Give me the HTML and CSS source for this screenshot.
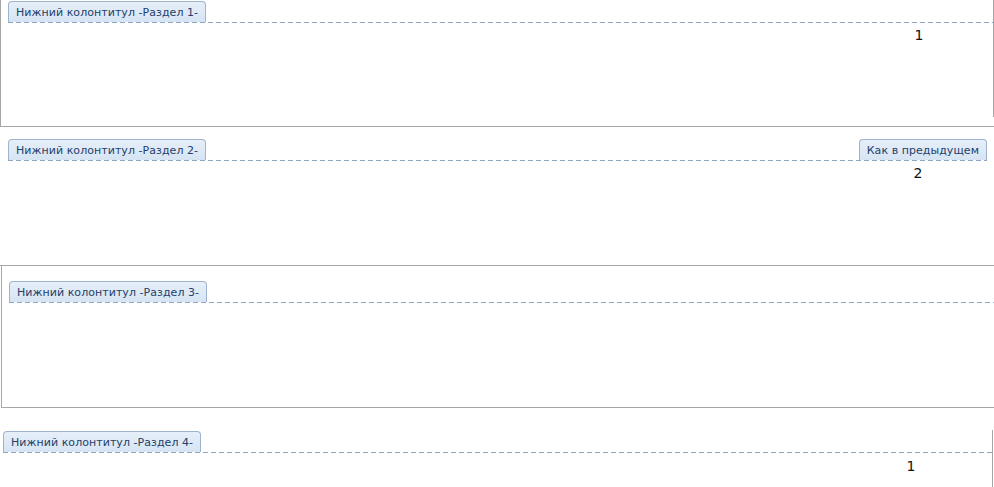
FILE: index.html
```html
<!DOCTYPE html>
<html lang="ru">
<head>
<meta charset="utf-8">
<link rel="stylesheet" href="styles.css">
</head>
<body>
<div class="doc">
  <section class="sec s1">
    <div class="bar">
      <span class="tab">Нижний колонтитул -Раздел 1-</span>
    </div>
    <div class="num">1</div>
  </section>
  <section class="sec s2">
    <div class="bar">
      <span class="tab">Нижний колонтитул -Раздел 2-</span>
      <span class="tab tab-right">Как в предыдущем</span>
    </div>
    <div class="num">2</div>
  </section>
  <section class="sec s3">
    <div class="bar">
      <span class="tab">Нижний колонтитул -Раздел 3-</span>
    </div>
  </section>
  <section class="sec s4">
    <div class="bar">
      <span class="tab">Нижний колонтитул -Раздел 4-</span>
    </div>
    <div class="num">1</div>
  </section>
</div>
</body>
</html>
```
FILE: styles.css
```css
html, body {
  margin: 0;
  padding: 0;
  background: #ffffff;
}
body {
  width: 994px;
  height: 487px;
  overflow: hidden;
  font-family: "DejaVu Sans", sans-serif;
}
.doc {
  display: flex;
  flex-direction: column;
}
.sec {
  box-sizing: border-box;
  display: flex;
  flex-direction: column;
}
.bar {
  display: flex;
  justify-content: space-between;
  align-items: flex-end;
  padding-bottom: 1px;
  background: repeating-linear-gradient(to right, #8ea6bf 0 5px, transparent 5px 8px) bottom left / 990px 1px no-repeat;
}
.tab {
  box-sizing: border-box;
  height: 21px;
  padding: 1px 7px 0;
  display: flex;
  align-items: center;
  font-size: 11px;
  letter-spacing: 0.05px;
  color: #24406a;
  background: linear-gradient(#e6eff9, #d6e4f3);
  border: 1px solid #9fb4cc;
  border-bottom: none;
  border-radius: 4px 4px 0 0;
}
.num {
  font-family: "DejaVu Sans", sans-serif;
  font-size: 14px;
  color: #111;
  line-height: 15px;
  width: 10px;
  text-align: center;
}
.s1 {
  height: 127px;
  border-left: 1px solid #a6a6a6;
  border-bottom: 1px solid #a6a6a6;
  padding: 1px 0 0 7px;
  background: linear-gradient(#a6a6a6, #a6a6a6) right top / 1px 117px no-repeat;
}
.s1 .num { margin: 5px 0 0 906px; }
.s2 {
  height: 139px;
  border-bottom: 1px solid #a6a6a6;
  padding: 12px 7px 0 8px;
}
.s2 .num { margin: 5px 0 0 905px; }
.s3 {
  height: 142px;
  margin-left: 1px;
  border-left: 1px solid #a6a6a6;
  border-bottom: 1px solid #a6a6a6;
  padding: 15px 0 0 7px;
}
.s4 {
  height: 80px;
  margin-right: 1px;
  padding: 23px 0 0 3px;
  background: linear-gradient(#a6a6a6, #a6a6a6) right 22px / 1px 60px no-repeat;
}
.s4 .num { margin: 6px 0 0 903px; }
```
